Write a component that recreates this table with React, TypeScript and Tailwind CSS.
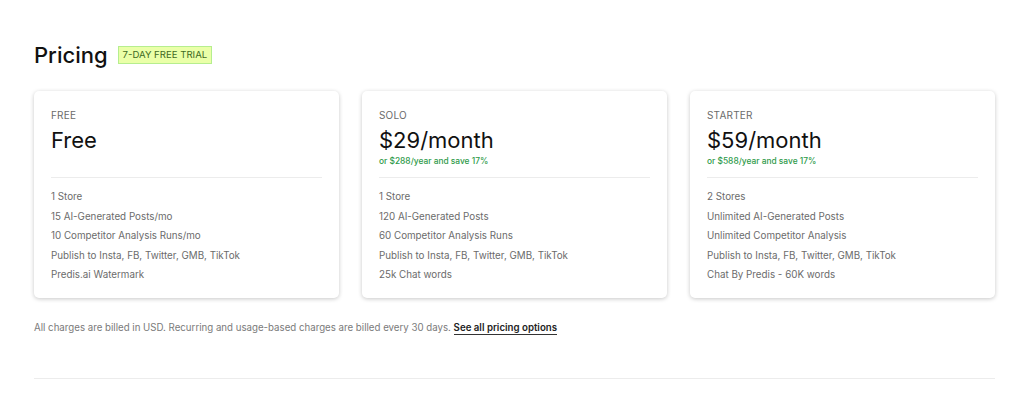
import React from "react"

type Plan = {
  label: string
  price: string
  yearly?: string
  features: string[]
}

const plans: Plan[] = [
  {
    label: "FREE",
    price: "Free",
    features: [
      "1 Store",
      "15 AI-Generated Posts/mo",
      "10 Competitor Analysis Runs/mo",
      "Publish to Insta, FB, Twitter, GMB, TikTok",
      "Predis.ai Watermark",
    ],
  },
  {
    label: "SOLO",
    price: "$29/month",
    yearly: "or $288/year and save 17%",
    features: [
      "1 Store",
      "120 AI-Generated Posts",
      "60 Competitor Analysis Runs",
      "Publish to Insta, FB, Twitter, GMB, TikTok",
      "25k Chat words",
    ],
  },
  {
    label: "STARTER",
    price: "$59/month",
    yearly: "or $588/year and save 17%",
    features: [
      "2 Stores",
      "Unlimited AI-Generated Posts",
      "Unlimited Competitor Analysis",
      "Publish to Insta, FB, Twitter, GMB, TikTok",
      "Chat By Predis - 60K words",
    ],
  },
]

function PlanCard({ plan }: { plan: Plan }) {
  return (
    <div className="rounded-[5px] bg-white px-[17px] pt-[17px] pb-[13px] shadow-[0_1px_4px_rgba(0,0,0,0.22)]">
      <div className="text-[10px] leading-[14px] tracking-[0.02em] text-[#6b6b6b]">{plan.label}</div>
      <div className="mt-[4px] text-[22px] leading-[28px] text-[#111]">{plan.price}</div>
      <div className="mt-[2px] h-[10px] text-[8.4px] leading-[10px] font-medium text-[#2e9a4a]">
        {plan.yearly ?? ""}
      </div>
      <div className="mt-[11px] mb-[9px] h-px bg-[#ececec]" />
      <ul className="flex flex-col">
        {plan.features.map((f) => (
          <li key={f} className="text-[9.8px] leading-[19.5px] text-[#6b6b6b]">
            {f}
          </li>
        ))}
      </ul>
    </div>
  )
}

export default function App() {
  return (
    <div className="min-h-[393px] bg-white pt-[40px] pr-[29px] pl-[34px] font-['Inter',sans-serif]">
      <div className="flex items-center gap-[10px]">
        <h1 className="text-[22px] leading-[30px] font-medium text-[#111]">Pricing</h1>
        <span className="border border-[#b6ee8e] bg-[#eaffa8] px-[4px] text-[9.6px] leading-[16px] text-[#3e6b23]">
          7-DAY FREE TRIAL
        </span>
      </div>

      <div className="mt-[21px] grid grid-cols-3 gap-[23px]">
        {plans.map((p) => (
          <PlanCard key={p.label} plan={p} />
        ))}
      </div>

      <p className="mt-[22px] text-[9.7px] leading-[16px] text-[#7a7a7a]">
        All charges are billed in USD. Recurring and usage-based charges are billed every 30 days.{" "}
        <a className="border-b border-[#333] pb-[1px] font-semibold text-[#222]">See all pricing options</a>
      </p>

      <div className="mt-[42px] h-px bg-[#ececec]" />
    </div>
  )
}
